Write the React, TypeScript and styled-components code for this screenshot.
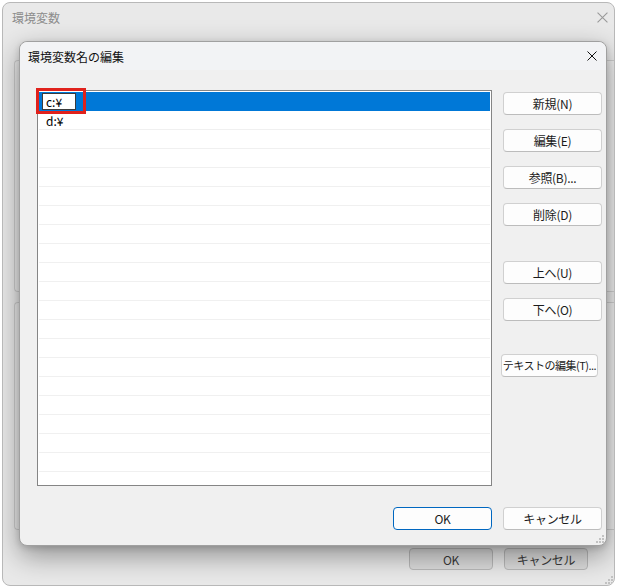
import styled, { createGlobalStyle } from "styled-components";

const GlobalStyle = createGlobalStyle`
  html, body {
    margin: 0;
    padding: 0;
    background: #ffffff;
  }
  body {
    font-family: "Noto Sans CJK JP", "Noto Sans", sans-serif;
    font-size: 12px;
    color: #1b1b1b;
  }
`;

const Desktop = styled.div`
  width: 620px;
  height: 588px;
  padding: 2px 0 0 2px;
  box-sizing: border-box;
`;

const OuterWindow = styled.div`
  position: relative;
  width: 613px;
  height: 584px;
  box-sizing: border-box;
  border: 1px solid #b8b8b8;
  border-radius: 8px;
  background: #e9e9e9;
  overflow: hidden;
  display: flex;
  flex-direction: column;
`;

const OuterTitleBar = styled.div`
  height: 29px;
  flex: none;
  display: flex;
  align-items: center;
  justify-content: space-between;
  padding: 0 6px 0 9px;
  color: #8c8c8c;
`;

const OuterBody = styled.div`
  flex: 1;
  min-height: 0;
  display: flex;
  flex-direction: column;
  gap: 10px;
  padding: 28px 0 0 11px;
`;

const GroupBox = styled.div<{ $h: number }>`
  height: ${(p) => p.$h}px;
  flex: none;
  border: 1px solid #cdcdcd;
  border-right: none;
  border-radius: 4px 0 0 4px;
  background: #ececec;
`;

const OuterFooter = styled.div`
  flex: none;
  display: flex;
  justify-content: flex-end;
  gap: 11px;
  padding: 0 26px 15px 0;
`;

const DimButton = styled.div`
  width: 84px;
  height: 22px;
  box-sizing: border-box;
  border: 1px solid #b9b9b9;
  border-radius: 4px;
  background: #dcdcdc;
  color: #3a3a3a;
  letter-spacing: -0.3px;
  display: flex;
  align-items: center;
  justify-content: center;
`;

const Dialog = styled.div`
  position: absolute;
  left: 16px;
  top: 38px;
  width: 588px;
  height: 505px;
  box-sizing: border-box;
  border: 1px solid #a0a0a0;
  border-radius: 8px;
  background: #f0f0f0;
  box-shadow: 0 10px 28px rgba(0, 0, 0, 0.38), 0 2px 6px rgba(0, 0, 0, 0.15);
  display: flex;
  flex-direction: column;
`;

const DialogTitleBar = styled.div`
  height: 28px;
  flex: none;
  display: flex;
  align-items: center;
  justify-content: space-between;
  padding: 0 9px 0 8px;
  border-radius: 8px 8px 0 0;
  background: #f2f3f5;
  color: #111111;
`;

const DialogBody = styled.div`
  flex: 1;
  min-height: 0;
  display: flex;
  flex-direction: column;
  padding: 20px 4px 15px 17px;
`;

const MainRow = styled.div`
  flex: 1;
  min-height: 0;
  display: flex;
  gap: 11px;
`;

const ListWrap = styled.div`
  position: relative;
  width: 455px;
  min-height: 0;
`;

const ListBox = styled.div`
  height: 100%;
  box-sizing: border-box;
  border: 1px solid #858585;
  background: #ffffff;
  padding: 1px;
  overflow: hidden;
`;

const Row = styled.div<{ $selected?: boolean }>`
  height: 19px;
  box-sizing: border-box;
  display: flex;
  align-items: center;
  padding-left: ${(p) => (p.$selected ? 3 : 7)}px;
  background: ${(p) => (p.$selected ? "#0078d7" : "#ffffff")};
  border-bottom: 1px solid ${(p) => (p.$selected ? "#0078d7" : "#f0f0f0")};
  color: #000000;
`;

const EditBox = styled.div`
  width: 34px;
  height: 17px;
  box-sizing: border-box;
  border: 1px solid #3c3c3c;
  background: #ffffff;
  padding-left: 3px;
  display: flex;
  align-items: center;
`;

const Highlight = styled.div`
  position: absolute;
  left: -1px;
  top: -2px;
  width: 50px;
  height: 26px;
  box-sizing: border-box;
  border: 3px solid #e0221c;
  pointer-events: none;
`;

const ButtonColumn = styled.div`
  width: 99px;
  display: flex;
  flex-direction: column;
  padding-top: 2px;
`;

const Button = styled.div<{ $top?: number; $shift?: number; $default?: boolean; $tight?: boolean }>`
  width: ${(p) => 99 - (p.$shift ?? 0)}px;
  height: 23px;
  flex: none;
  margin-top: ${(p) => p.$top ?? 0}px;
  margin-left: ${(p) => -(p.$shift ?? 0)}px;
  box-sizing: border-box;
  padding-bottom: 1px;
  border: 1px solid ${(p) => (p.$default ? "#0067c0" : "#d0d0d0")};
  border-bottom-color: ${(p) => (p.$default ? "#0067c0" : "#bcbcbc")};
  border-radius: 4px;
  background: #fdfdfd;
  color: #1b1b1b;
  font-size: ${(p) => (p.$tight ? "11px" : "12px")};
  letter-spacing: ${(p) => (p.$tight ? "-0.5px" : "-0.3px")};
  display: flex;
  align-items: center;
  justify-content: center;
  white-space: nowrap;
  overflow: hidden;
`;

const Footer = styled.div`
  flex: none;
  display: flex;
  justify-content: flex-end;
  gap: 11px;
  margin-top: 21px;
`;

const Grip = styled.svg<{ $right: number; $bottom: number }>`
  position: absolute;
  right: ${(p) => p.$right}px;
  bottom: ${(p) => p.$bottom}px;
`;

function CloseIcon({ color, size }: { color: string; size: number }) {
  return (
    <svg width={size} height={size} viewBox="0 0 10 10">
      <path d="M0.5 0.5L9.5 9.5M9.5 0.5L0.5 9.5" stroke={color} strokeWidth="1" />
    </svg>
  );
}

function GripDots({ right, bottom }: { right: number; bottom: number }) {
  const dots = [
    [6, 0],
    [3, 3],
    [6, 3],
    [0, 6],
    [3, 6],
    [6, 6],
  ];
  return (
    <Grip $right={right} $bottom={bottom} width="8" height="8" viewBox="0 0 8 8">
      {dots.map(([x, y]) => (
        <rect key={`${x}-${y}`} x={x} y={y} width="2" height="2" fill="#c2c2c2" />
      ))}
    </Grip>
  );
}

const entries = ["c:¥", "d:¥", ...Array(20).fill("")];

const sideButtons = [
  { label: "新規(N)", top: 0 },
  { label: "編集(E)", top: 14 },
  { label: "参照(B)...", top: 14 },
  { label: "削除(D)", top: 14 },
  { label: "上へ(U)", top: 35 },
  { label: "下へ(O)", top: 14 },
  { label: "テキストの編集(T)...", top: 33, shift: 2, tight: true },
];

export default function App() {
  return (
    <>
      <GlobalStyle />
      <Desktop>
        <OuterWindow>
          <OuterTitleBar>
            <span>環境変数</span>
            <CloseIcon color="#9a9a9a" size={11} />
          </OuterTitleBar>
          <OuterBody>
            <GroupBox $h={230} />
            <GroupBox $h={226} />
          </OuterBody>
          <OuterFooter>
            <DimButton>OK</DimButton>
            <DimButton>キャンセル</DimButton>
          </OuterFooter>
          <GripDots right={1} bottom={1} />

          <Dialog>
            <DialogTitleBar>
              <span>環境変数名の編集</span>
              <CloseIcon color="#111111" size={10} />
            </DialogTitleBar>
            <DialogBody>
              <MainRow>
                <ListWrap>
                  <ListBox>
                    {entries.map((text, i) =>
                      i === 0 ? (
                        <Row key={i} $selected>
                          <EditBox>{text}</EditBox>
                        </Row>
                      ) : (
                        <Row key={i}>{text}</Row>
                      )
                    )}
                  </ListBox>
                  <Highlight />
                </ListWrap>
                <ButtonColumn>
                  {sideButtons.map((b) => (
                    <Button key={b.label} $top={b.top} $shift={b.shift} $tight={b.tight}>
                      {b.label}
                    </Button>
                  ))}
                </ButtonColumn>
              </MainRow>
              <Footer>
                <Button $default>OK</Button>
                <Button>キャンセル</Button>
              </Footer>
            </DialogBody>
            <GripDots right={2} bottom={2} />
          </Dialog>
        </OuterWindow>
      </Desktop>
    </>
  );
}
